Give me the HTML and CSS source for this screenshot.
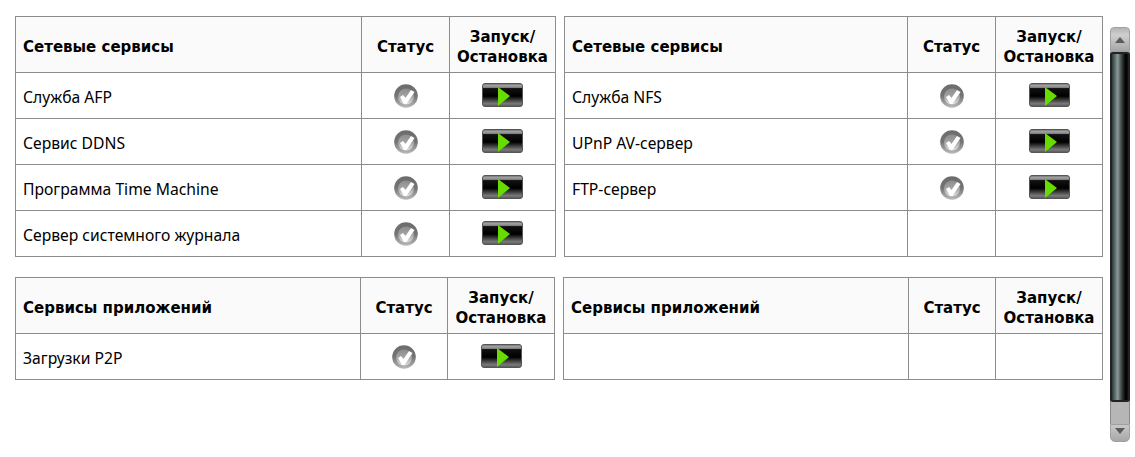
FILE: index.html
```html
<!DOCTYPE html>
<html>
    <head>
        <title>Сервисы</title>
        <meta charset="UTF-8">
        <link rel="stylesheet" href="styles.css">
    </head>
    <body>
        <svg class="defs" width="0" height="0">
            <defs>
                <linearGradient id="g-anel" x1="0" y1="0" x2="0" y2="1">
                    <stop offset="0" stop-color="#6c6c6c"/>
                    <stop offset="0.5" stop-color="#747474"/>
                    <stop offset="1" stop-color="#bcbcbc"/>
                </linearGradient>
                <linearGradient id="g-disco" x1="0" y1="0" x2="0" y2="1">
                    <stop offset="0" stop-color="#8c8c8c"/>
                    <stop offset="0.5" stop-color="#a4a4a4"/>
                    <stop offset="1" stop-color="#e0e0e0"/>
                </linearGradient>
                <linearGradient id="g-botao" x1="0" y1="0" x2="0" y2="1">
                    <stop offset="0" stop-color="#666"/>
                    <stop offset="0.08" stop-color="#a0a0a0"/>
                    <stop offset="0.17" stop-color="#8a8a8a"/>
                    <stop offset="0.22" stop-color="#111"/>
                    <stop offset="0.55" stop-color="#000"/>
                    <stop offset="0.88" stop-color="#7a7a7a"/>
                    <stop offset="1" stop-color="#555"/>
                </linearGradient>
                <symbol id="status" viewBox="0 0 24 24">
                    <circle cx="12" cy="12" r="11.8" fill="url(#g-anel)"/>
                    <circle cx="12" cy="12.5" r="8" fill="url(#g-disco)"/>
                    <path d="M6 13 L9 11 L11.5 14 L17 6 L20.5 8 L12.5 20 L10 20 Z" fill="#fff"/>
                </symbol>
                <symbol id="play" viewBox="0 0 41 24">
                    <rect x="0.5" y="0.5" width="40" height="23" rx="2.5" fill="url(#g-botao)" stroke="#555"/>
                    <path d="M16 4 L28 13 L16 23 Z" fill="#66dc00"/>
                </symbol>
            </defs>
        </svg>

        <div class="pagina">
            <div class="conteudo">
                <div class="grupo">
                    <table class="tabela primeira">
                        <tr><th>Сетевые сервисы</th><th>Статус</th><th>Запуск/<br>Остановка</th></tr>
                        <tr><td>Служба AFP</td><td><svg class="ico-status"><use href="#status"/></svg></td><td><svg class="ico-play"><use href="#play"/></svg></td></tr>
                        <tr><td>Сервис DDNS</td><td><svg class="ico-status"><use href="#status"/></svg></td><td><svg class="ico-play"><use href="#play"/></svg></td></tr>
                        <tr><td>Программа Time Machine</td><td><svg class="ico-status"><use href="#status"/></svg></td><td><svg class="ico-play"><use href="#play"/></svg></td></tr>
                        <tr><td>Сервер системного журнала</td><td><svg class="ico-status"><use href="#status"/></svg></td><td><svg class="ico-play"><use href="#play"/></svg></td></tr>
                    </table>
                    <table class="tabela segunda">
                        <tr><th>Сетевые сервисы</th><th>Статус</th><th>Запуск/<br>Остановка</th></tr>
                        <tr><td>Служба NFS</td><td><svg class="ico-status"><use href="#status"/></svg></td><td><svg class="ico-play"><use href="#play"/></svg></td></tr>
                        <tr><td>UPnP AV-сервер</td><td><svg class="ico-status"><use href="#status"/></svg></td><td><svg class="ico-play"><use href="#play"/></svg></td></tr>
                        <tr><td>FTP-сервер</td><td><svg class="ico-status"><use href="#status"/></svg></td><td><svg class="ico-play"><use href="#play"/></svg></td></tr>
                        <tr><td></td><td></td><td></td></tr>
                    </table>
                </div>
                <div class="grupo">
                    <table class="tabela terceira">
                        <tr><th>Сервисы приложений</th><th>Статус</th><th>Запуск/<br>Остановка</th></tr>
                        <tr><td>Загрузки P2P</td><td><svg class="ico-status"><use href="#status"/></svg></td><td><svg class="ico-play"><use href="#play"/></svg></td></tr>
                    </table>
                    <table class="tabela quarta">
                        <tr><th>Сервисы приложений</th><th>Статус</th><th>Запуск/<br>Остановка</th></tr>
                        <tr><td></td><td></td><td></td></tr>
                    </table>
                </div>
            </div>

            <div class="rolagem">
                <div class="seta seta-cima"></div>
                <div class="trilho"><div class="polegar"></div></div>
                <div class="seta seta-baixo"></div>
            </div>
        </div>
    </body>
</html>
```

FILE: styles.css
```css
* {
    margin: 0;
    padding: 0;
    box-sizing: border-box;
    font-family: "DejaVu Sans", sans-serif;
    color: #000;
}
body {
    background-color: #fff;
    overflow: hidden;
}
.defs {
    display: block;
    height: 0;
}
.pagina {
    display: flex;
    height: 457px;
}
.conteudo {
    width: 1110px;
    padding: 16px 7px 0 15px;
}
.grupo {
    display: flex;
    gap: 8px;
    margin-bottom: 20px;
    align-items: flex-start;
}
.tabela {
    border-collapse: collapse;
    table-layout: fixed;
    font-size: 14px;
}
.primeira { width: 541px; }
.segunda { width: 539px; }
.terceira { width: 540px; }
.quarta { width: 540px; }
.tabela th,
.tabela td {
    border: 1px solid #8c8c8c;
    text-align: center;
    vertical-align: middle;
}
.tabela th {
    height: 56px;
    padding-top: 4px;
    background-color: #fafafa;
    font-size: 15px;
    font-weight: bold;
    line-height: 20px;
}
.tabela td {
    height: 46px;
    line-height: 16px;
}
.tabela td:last-child {
    padding-bottom: 2px;
}
.tabela th:first-child {
    text-align: left;
    padding-left: 7px;
}
.tabela td:first-child {
    text-align: left;
    padding: 2px 0 0 7px;
    font-family: "Noto Sans", sans-serif;
    font-size: 15.7px;
}
.primeira th:nth-child(2) { width: 88px; }
.primeira th:nth-child(3) { width: 106px; }
.segunda th:nth-child(2) { width: 88px; }
.segunda th:nth-child(3) { width: 107px; }
.terceira th:nth-child(2) { width: 87px; }
.terceira th:nth-child(3) { width: 107px; }
.quarta th:nth-child(2) { width: 87px; }
.quarta th:nth-child(3) { width: 107px; }
.ico-status {
    display: block;
    width: 24px;
    height: 24px;
    margin: 0 auto;
}
.ico-play {
    display: block;
    width: 41px;
    height: 24px;
    margin: 0 auto;
}
.rolagem {
    width: 20px;
    margin-top: 27px;
    height: 415px;
    display: flex;
    flex-direction: column;
}
.seta {
    background: linear-gradient(#b4b4b4, #cfcfcf 30%, #a6a6a6);
    border: 1px solid #a0a0a0;
    display: flex;
    align-items: center;
    justify-content: center;
}
.seta-cima {
    height: 25px;
    border-radius: 4px 4px 0 0;
}
.seta-baixo {
    height: 18px;
    border-radius: 0 0 5px 5px;
    background: linear-gradient(#c8c8c8, #a8a8a8);
}
.seta::after {
    content: "";
    width: 0;
    height: 0;
    border-left: 5px solid transparent;
    border-right: 5px solid transparent;
}
.seta-cima::after {
    border-bottom: 6px solid #5a5a5a;
}
.seta-baixo::after {
    margin-bottom: 4px;
    border-top: 6px solid #5a5a5a;
}
.trilho {
    flex: 1;
    background-color: #b6b6b6;
    border-left: 1px solid #8a8a8a;
    border-right: 1px solid #8a8a8a;
}
.polegar {
    height: 350px;
    margin: 0 -1px;
    border: 2px solid #222;
    border-radius: 3px;
    background: linear-gradient(90deg, #2a3a38, #8a9a98 35%, #3a4442 60%, #000 85%, #111);
}
```
